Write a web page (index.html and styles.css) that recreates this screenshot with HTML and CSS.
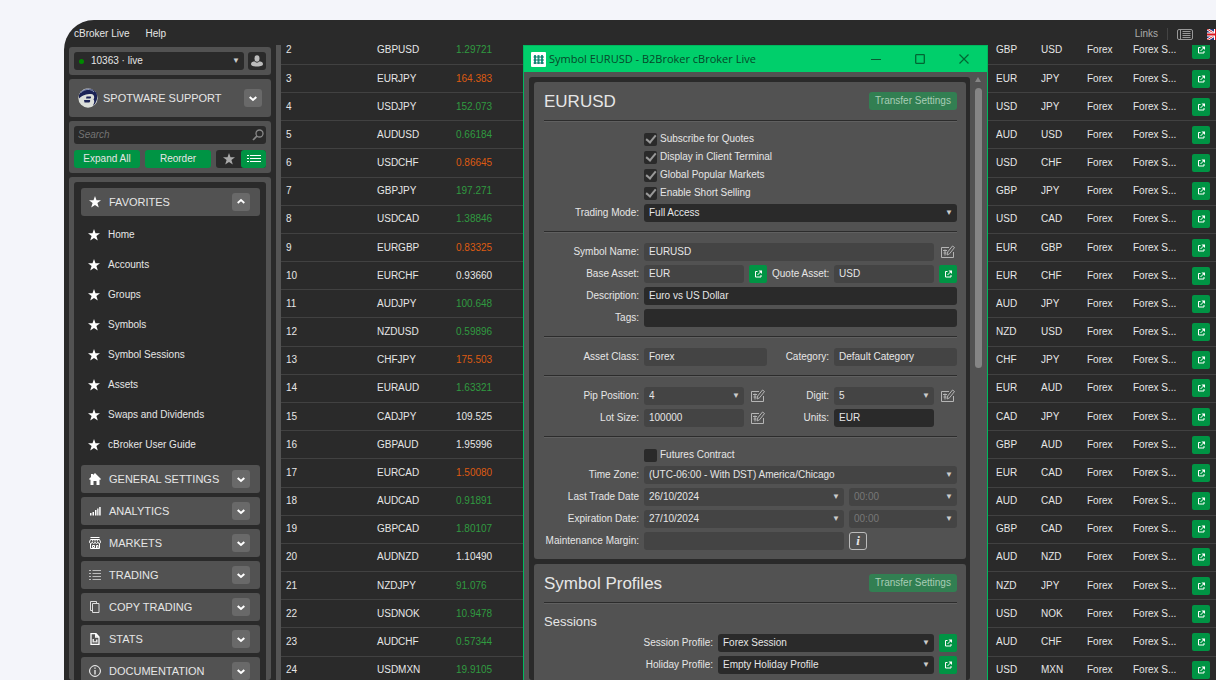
FILE: index.html
```html
<!doctype html>
<html lang="en">
<head>
<meta charset="utf-8">
<title>cBroker Live</title>
<link rel="stylesheet" href="styles.css">
</head>
<body>
<svg class="defs" aria-hidden="true">
	<symbol id="star" viewBox="0 0 12 12"><path fill="currentColor" d="M6 0l1.5 4.3H12L8.4 7l1.4 4.6L6 8.9l-3.8 2.7L3.6 7 0 4.3h4.5z"/></symbol>
	<symbol id="down" viewBox="0 0 12 12"><path fill="none" stroke="currentColor" stroke-width="2" d="M2.700 5L6 8l3.300-3"/></symbol>
	<symbol id="up" viewBox="0 0 12 12"><path fill="none" stroke="currentColor" stroke-width="1.700" d="M2.700 7L6 4l3.300 3"/></symbol>
	<symbol id="open" viewBox="0 0 18 18"><path fill="none" stroke="currentColor" d="M8.500 6.500h-2v5.500h5.500v-2M8.500 10l3-3"/><path fill="currentColor" d="M9.500 5.500h3.500V9z"/></symbol>
	<symbol id="edit" viewBox="0 0 14 14"><path fill="none" stroke="currentColor" d="M8 2.500H.5v10h12V7M2 5.500h4M4 4.500v6M2.500 8h3M6 10l.7-3L11.500 1l2 1.500-5 6.300z"/></symbol>
	<symbol id="home" viewBox="0 0 12 12"><path fill="currentColor" d="M6 0l6 6-1 1-.5-.5V12H7.500V8h-3v4h-3V6.500L1 7 0 6l2-2V1h2v1z"/></symbol>
	<symbol id="bars" viewBox="0 0 12 12"><path fill="currentColor" d="M1 8h1.500v2.500H1zM3.500 7H5v3.500H3.500zM6 5h1.500v5.500H6zM8.200 3.500h1.300v7H8.200zM10.200 2h1.500v8.500h-1.500z"/></symbol>
	<symbol id="shop" viewBox="0 0 12 12"><path fill="none" stroke="currentColor" d="M1.500.5h9M1.500 2.500h9l1 2.500c0 2-2.500 2-2.700 0 0 2-2.500 2-2.800 0 0 2-2.500 2-2.800 0 0 2-2.700 2-2.700 0zM1.500 6.500v5h9v-5M3.500 8.500h2v2h-2zM7.500 11V8.500h1.500V11M3.700 2.500v2M6 2.500v2M8.300 2.500v2"/></symbol>
	<symbol id="list" viewBox="0 0 12 12"><path stroke="#bbb" d="M0 1.500h2M3.500 1.500H12M0 4.500h2M3.500 4.500H12M0 7.500h2M3.500 7.500H12M0 10.500h2M3.500 10.500H12"/></symbol>
	<symbol id="copy" viewBox="0 0 12 12"><path fill="none" stroke="#ddd" d="M3.500 2.500h6.500v9H3.500zM3 9.500H1.500v-9h6V2"/></symbol>
	<symbol id="stats" viewBox="0 0 12 12"><path fill="none" stroke="currentColor" stroke-width="1.300" d="M2 .7h5L10 4v7.300H2zM6.700.7V4H10M4.200 9.500V6M6 9.500V8M7.800 9.500v-3"/></symbol>
	<symbol id="info" viewBox="0 0 12 12"><circle cx="6" cy="6" r="5.400" fill="none" stroke="currentColor"/><path stroke="currentColor" stroke-width="1.200" d="M6 2.500v1.300M6 5v4.500"/></symbol>
</svg>

<div class="app">
	<header class="menu">
		<a href="#">cBroker Live</a>
		<a href="#">Help</a>
		<div class="menu-right">
			<a href="#">Links</a>
			<i class="split"></i>
			<svg class="layout" viewBox="0 0 16 11"><rect x=".5" y=".5" width="15" height="10" rx="1.500" fill="none" stroke="#999"/><path stroke="#999" d="M3.500 0v11M5.500 2.500h8M5.500 4.500h8M5.500 6.500h8M5.500 8.500h8"/></svg>
			<svg class="flag" viewBox="0 0 18 11"><path fill="#24367d" d="M0 0h18v11H0z"/><path stroke="#fff" stroke-width="2.500" d="M0 0l18 11M18 0L0 11"/><path stroke="#d22" d="M0 0l18 11M18 0L0 11"/><path stroke="#fff" stroke-width="4" d="M9 0v11M0 5.500h18"/><path stroke="#d8171f" stroke-width="2" d="M9 0v11M0 5.500h18"/></svg>
		</div>
	</header>

	<div class="main">
		<aside class="side">
			<div class="panel account">
				<div class="pick account-pick"><select aria-label="Account"><option>10363 · live</option></select><i class="dot"></i></div>
				<button class="user" aria-label="User"><svg viewBox="0 0 12 12"><ellipse cx="6" cy="3.500" rx="2.500" ry="3.300" fill="#bbb"/><path fill="#bbb" d="M0 9c0-2 2-2.500 4-2.500.5 1.500 3.500 1.500 4 0 2 0 4 .5 4 2.500 0 1.500-1.500 2.500-6 2.500S0 10.500 0 9z"/></svg></button>
			</div>

			<div class="panel company">
				<svg class="logo" viewBox="0 0 20 20"><circle cx="10" cy="10" r="9.700" fill="#dcdfda"/><path fill="#1c2355" d="M1 7C4 0 14-2 18.500 5c1.500 5 .5 9-3.500 13 1-3 2-4.500.5-6.500 1.500-2 .5-5.500-2.500-5.500-5 0-8 1-12 4.500z"/><path fill="#1c2355" d="M8.500 8.500h4c1 0 .5 2-.5 2H8zM6 12h5.500c1.500 0 .5 2.500-.5 2.500H6.500z"/><path fill="none" stroke="#8c97b5" d="M3 4.500C7 .5 13 .5 16 4"/></svg>
				<span>SPOTWARE SUPPORT</span>
				<button class="toggle" aria-label="Expand"><svg><use href="#down"/></svg></button>
			</div>

			<div class="panel tools">
				<div class="search">
					<input type="search" placeholder="Search" aria-label="Search">
					<svg viewBox="0 0 12 12"><circle cx="7.500" cy="4.500" r="3.500" fill="none" stroke="#888" stroke-width="1.300"/><path stroke="#888" stroke-width="1.700" d="M5 7L1 11"/></svg>
				</div>
				<div class="tool-row">
					<button class="green">Expand All</button>
					<button class="green">Reorder</button>
					<div class="switch">
						<button aria-label="Favorites"><svg><use href="#star"/></svg></button>
						<button class="on" aria-label="List"><svg viewBox="0 0 14 10"><path stroke="#fff" d="M0 1.500h2M3 1.500h11M0 4.500h2M3 4.500h11M0 7.500h2M3 7.500h11" /></svg></button>
					</div>
				</div>
			</div>

			<nav class="panel nav">
				<div class="nav-inner">
					<div class="group"><svg><use href="#star"/></svg><span>FAVORITES</span><button class="toggle" aria-label="Collapse"><svg><use href="#up"/></svg></button></div>
					<ul class="links">
						<li><a href="#"><svg><use href="#star"/></svg>Home</a></li>
						<li><a href="#"><svg><use href="#star"/></svg>Accounts</a></li>
						<li><a href="#"><svg><use href="#star"/></svg>Groups</a></li>
						<li><a href="#"><svg><use href="#star"/></svg>Symbols</a></li>
						<li><a href="#"><svg><use href="#star"/></svg>Symbol Sessions</a></li>
						<li><a href="#"><svg><use href="#star"/></svg>Assets</a></li>
						<li><a href="#"><svg><use href="#star"/></svg>Swaps and Dividends</a></li>
						<li><a href="#"><svg><use href="#star"/></svg>cBroker User Guide</a></li>
					</ul>
					<div class="group"><svg><use href="#home"/></svg><span>GENERAL SETTINGS</span><button class="toggle" aria-label="Expand"><svg><use href="#down"/></svg></button></div>
					<div class="group"><svg><use href="#bars"/></svg><span>ANALYTICS</span><button class="toggle" aria-label="Expand"><svg><use href="#down"/></svg></button></div>
					<div class="group"><svg><use href="#shop"/></svg><span>MARKETS</span><button class="toggle" aria-label="Expand"><svg><use href="#down"/></svg></button></div>
					<div class="group"><svg><use href="#list"/></svg><span>TRADING</span><button class="toggle" aria-label="Expand"><svg><use href="#down"/></svg></button></div>
					<div class="group"><svg><use href="#copy"/></svg><span>COPY TRADING</span><button class="toggle" aria-label="Expand"><svg><use href="#down"/></svg></button></div>
					<div class="group"><svg><use href="#stats"/></svg><span>STATS</span><button class="toggle" aria-label="Expand"><svg><use href="#down"/></svg></button></div>
					<div class="group"><svg><use href="#info"/></svg><span>DOCUMENTATION</span><button class="toggle" aria-label="Expand"><svg><use href="#down"/></svg></button></div>
				</div>
			</nav>
		</aside>

		<div class="grid">
			<table>
				<colgroup><col class="c-num"><col class="c-sym"><col><col class="c-base"><col class="c-quote"><col class="c-quote"><col class="c-cat"><col class="c-open"></colgroup>
				<tbody id="rows"></tbody>
			</table>
		</div>
	</div>

	<section class="window" role="dialog" aria-labelledby="win-title">
		<div class="titlebar">
			<svg class="win-icon" viewBox="0 0 15 15"><rect width="15" height="15" rx="1" fill="#fff"/><path stroke="#1b9e8a" stroke-width="2" d="M4 3v9M7.500 3v9M11 3v9"/><path stroke="#156d63" stroke-width="1.200" d="M2.500 5H13M2.500 8H13M2.500 11H13"/></svg>
			<span id="win-title">Symbol EURUSD - B2Broker cBroker Live</span>
			<button aria-label="Minimize"><svg viewBox="0 0 10 10"><path stroke="#0a5a32" d="M0 5.500h10"/></svg></button>
			<button aria-label="Maximize"><svg viewBox="0 0 10 10"><rect x=".7" y=".7" width="8.600" height="8.600" rx=".5" fill="none" stroke="#063" stroke-width="1.300"/></svg></button>
			<button aria-label="Close"><svg viewBox="0 0 10 10"><path stroke="#063" stroke-width="1.200" d="M.5.5l9 9M9.500.5l-9 9"/></svg></button>
		</div>
		<div class="win-body">
			<div class="frame">
				<form class="card">
					<div class="head"><h2>EURUSD</h2><button type="button" class="transfer" disabled>Transfer Settings</button></div>
					<hr>
					<div class="rows">
						<label class="check"><input type="checkbox" checked disabled>Subscribe for Quotes</label>
						<label class="check"><input type="checkbox" checked disabled>Display in Client Terminal</label>
						<label class="check"><input type="checkbox" checked disabled>Global Popular Markets</label>
						<label class="check"><input type="checkbox" checked disabled>Enable Short Selling</label>
						<div class="row wide"><label for="mode">Trading Mode:</label><div class="pick"><select id="mode"><option>Full Access</option></select></div></div>
					</div>
					<hr>
					<div class="rows">
						<div class="row name"><label for="name">Symbol Name:</label><input id="name" class="dim" value="EURUSD" readonly><button type="button" class="edit" aria-label="Edit"><svg><use href="#edit"/></svg></button></div>
						<div class="row">
							<label for="base">Base Asset:</label><input id="base" class="dim" value="EUR" readonly><button type="button" class="open" aria-label="Open"><svg><use href="#open"/></svg></button>
							<label for="quote">Quote Asset:</label><input id="quote" class="dim" value="USD" readonly><button type="button" class="open" aria-label="Open"><svg><use href="#open"/></svg></button>
						</div>
						<div class="row wide"><label for="desc">Description:</label><input id="desc" value="Euro vs US Dollar"></div>
						<div class="row wide"><label for="tags">Tags:</label><input id="tags"></div>
					</div>
					<hr>
					<div class="rows">
						<div class="row">
							<label for="class">Asset Class:</label><input id="class" class="dim span" value="Forex" readonly>
							<label for="cat">Category:</label><input id="cat" class="dim span" value="Default Category" readonly>
						</div>
					</div>
					<hr>
					<div class="rows">
						<div class="row">
							<label for="pip">Pip Position:</label><div class="pick dim"><select id="pip"><option>4</option></select></div><button type="button" class="edit" aria-label="Edit"><svg><use href="#edit"/></svg></button>
							<label for="digit">Digit:</label><div class="pick dim"><select id="digit"><option>5</option></select></div><button type="button" class="edit" aria-label="Edit"><svg><use href="#edit"/></svg></button>
						</div>
						<div class="row">
							<label for="lot">Lot Size:</label><input id="lot" class="dim" value="100000" readonly><button type="button" class="edit" aria-label="Edit"><svg><use href="#edit"/></svg></button>
							<label for="units">Units:</label><input id="units" value="EUR">
						</div>
					</div>
					<hr>
					<div class="rows">
						<label class="check"><input type="checkbox" disabled>Futures Contract</label>
						<div class="row wide"><label for="zone">Time Zone:</label><div class="pick dim"><select id="zone"><option>(UTC-06:00 - With DST) America/Chicago</option></select></div></div>
						<div class="row date"><label for="last">Last Trade Date</label><div class="pick dim"><select id="last"><option>26/10/2024</option></select></div><div class="pick dim off"><select aria-label="Last trade time"><option>00:00</option></select></div></div>
						<div class="row date"><label for="exp">Expiration Date:</label><div class="pick dim"><select id="exp"><option>27/10/2024</option></select></div><div class="pick dim off"><select aria-label="Expiration time"><option>00:00</option></select></div></div>
						<div class="row date"><label for="margin">Maintenance Margin:</label><input id="margin" class="dim" readonly><button type="button" class="help" aria-label="About maintenance margin">i</button></div>
					</div>
				</form>
				<form class="card">
					<div class="head"><h2>Symbol Profiles</h2><button type="button" class="transfer" disabled>Transfer Settings</button></div>
					<hr>
					<div class="rows">
						<h3>Sessions</h3>
						<div class="row profile"><label for="session">Session Profile:</label><div class="pick"><select id="session"><option>Forex Session</option></select></div><button type="button" class="open" aria-label="Open"><svg><use href="#open"/></svg></button></div>
						<div class="row profile"><label for="holiday">Holiday Profile:</label><div class="pick"><select id="holiday"><option>Empty Holiday Profile</option></select></div><button type="button" class="open" aria-label="Open"><svg><use href="#open"/></svg></button></div>
					</div>
				</form>
			</div>
			<div class="scroll"><i class="arrow"></i><i class="thumb"></i></div>
		</div>
	</section>
</div>
<script src="script.js"></script>
</body>
</html>
```

FILE: styles.css
```css
*{box-sizing:border-box;}
body{margin:0;background:#f4f5fa;color:#e6e6e6;font:10px/18px "Liberation Sans",Arial,sans-serif;}
button,input,select{font:inherit;color:inherit;border:0;margin:0;padding:0;background:none;outline:0;min-width:0;}
button{display:flex;align-items:center;justify-content:center;}
a{color:inherit;text-decoration:none;}
svg{display:block;flex:none;width:12px;height:12px;}
.defs{position:absolute;width:0;height:0;}

.app{position:relative;display:flex;flex-direction:column;height:calc(100vh - 20px);margin:20px 0 0 64px;background:#2a2a2a;border-top-left-radius:30px;overflow:hidden;}
.menu{display:flex;align-items:center;gap:16px;height:25px;padding:3px 0 0 10px;flex:none;}
.menu-right{display:flex;align-items:center;gap:9px;margin-left:auto;color:#aaa;overflow:hidden;}
.split{width:1px;height:12px;background:#444;}
.layout{width:16px;height:11px;}
.flag{width:18px;height:11px;margin:0 -9px 0 5px;}
.main{display:flex;flex:1;min-height:0;}

/* sidebar */
.side{display:flex;flex-direction:column;gap:4px;flex:none;width:212px;padding:2px 5px 0;}
.panel{background:#525252;border-radius:3px;padding:5px;flex:none;}
.account{display:flex;gap:4px;}
.account-pick{flex:1;}
.dot{position:absolute;left:5px;top:7px;width:5px;height:5px;border-radius:50%;background:#008a00;}
.user{width:18px;height:18px;background:#2a2a2a;border-radius:3px;}
.company{display:flex;align-items:center;height:38px;padding:0 9px;font-size:11px;}
.company span{flex:1;padding-left:5px;}
.logo{width:20px;height:20px;}
.toggle{width:18px;height:18px;background:#696969;border-radius:3px;color:#fff;}
.tools{display:flex;flex-direction:column;gap:6px;}
.search{display:flex;align-items:center;height:18px;padding:0 2px 0 4px;background:#2a2a2a;border-radius:3px;}
.search input{flex:1;font-style:italic;}
.search input::placeholder{color:#737373;}
.tool-row{display:flex;gap:5px;}
.green{flex:1;height:18px;background:#009444;border-radius:3px;}
.switch{display:flex;width:50px;height:18px;background:#2a2a2a;border-radius:3px;}
.switch button{flex:1;color:#aaa;border-radius:3px;}
.switch .on{background:#009444;}
.switch .on svg{width:14px;height:10px;}
.nav{flex:1;min-height:0;padding-bottom:0;overflow:hidden;}
.nav-inner{padding:6px 6px 0 7px;background:#2a2a2a;border-radius:3px;}
.group{display:flex;align-items:center;height:28px;margin-bottom:4px;padding:0 10px 0 8px;background:#525252;border-radius:3px;font-size:11px;}
.group span{flex:1;padding-left:8px;}
.links{list-style:none;margin:0;padding:0 0 5px 7px;}
.links a{display:flex;align-items:center;gap:8px;height:30px;}
.links svg,.group svg{color:#fff;}

/* symbols table */
.grid{flex:1;min-width:0;overflow:hidden;border-left:5px solid #545454;}
table{width:100%;height:648px;margin-top:-8px;table-layout:fixed;border-collapse:collapse;}
td{padding:0 0 0 5px;border-bottom:1px solid #414141;white-space:nowrap;overflow:hidden;}
.c-num{width:91px;}
.c-sym{width:79px;}
.c-base{width:45px;}
.c-quote{width:46px;}
.c-cat{width:59px;}
.c-open{width:29px;}
.rise{color:#309a40;}
.fall{color:#dd5a12;}
.open{width:18px;height:18px;background:#009444;border-radius:2px;color:#fff;}
.open svg{width:18px;height:18px;}

/* symbol window */
.window{position:absolute;left:459px;top:25px;bottom:0;width:465px;display:flex;flex-direction:column;background:#525252;border:1px solid #00b85f;border-bottom:0;overflow:hidden;}
.titlebar{display:flex;align-items:center;height:26px;flex:none;padding:0 1px 0 7px;background:#00cf6b;color:#06482a;font:11px/18px "Open Sans","Noto Sans",sans-serif;}
.titlebar span{flex:1;padding-left:3px;white-space:nowrap;}
.win-icon{width:15px;height:15px;}
.titlebar button{width:44px;height:26px;}
.titlebar button svg{width:10px;height:10px;}
.win-body{display:flex;flex:1;min-height:0;padding:5px 1px 0 5px;}
.frame{display:flex;flex-direction:column;gap:5px;flex:1;padding:5px 4px 0 5px;background:#2a2a2a;border-radius:3px;}
.card{padding:10px 9px 9px 10px;background:#525252;border-radius:3px;flex:none;}
.head{display:flex;justify-content:space-between;height:19px;}
h2,h3{margin:0;font-weight:normal;}
h2{font-size:17px;line-height:19px;}
h3{font-size:13px;line-height:16px;}
.transfer{width:88px;height:18px;background:#327f52;border-radius:3px;color:#a9cdb6;}
hr{height:2px;margin:9px 0 10px;border:0;border-top:1px solid #2c2c2c;background:#606060;}
.rows{display:flex;flex-direction:column;gap:4px;}
.row{display:grid;grid-template-columns:95px minmax(0,1fr) 18px 57px minmax(0,1fr) 18px;gap:5px;height:18px;}
.row label{text-align:right;white-space:nowrap;}
.wide{grid-template-columns:95px 1fr;}
.name{grid-template-columns:95px 1fr 18px;}
.date{grid-template-columns:95px 1fr 108px;}
.profile{grid-template-columns:169px 1fr 18px;}
.row input{padding:0 5px;background:#2a2a2a;border-radius:3px;width:100%;}
.pick{position:relative;background:#2a2a2a;border-radius:3px;}
.pick select{width:100%;height:18px;padding:0 16px 0 5px;appearance:none;display:block;}
.account-pick select{padding-left:17px;}
.pick::after{content:"▼";position:absolute;right:4px;top:0;font-size:8px;color:#ccc;pointer-events:none;}
.row .dim{background:#444;}
.off select{color:#777;}
.span{grid-column:span 2;}
.edit{color:#b5b5b5;}
.edit svg{width:14px;height:14px;}
.check{display:flex;align-items:center;gap:3px;height:14px;margin-left:100px;}
.check input{appearance:none;display:grid;place-items:center;width:13px;height:13px;background:#2a2a2a;border-radius:2px;}
.check input:checked::after{content:"";width:4px;height:8px;margin-top:-2px;border:solid #999;border-width:0 2px 2px 0;transform:rotate(40deg);}
.help{width:18px;height:18px;border:1px solid #bbb;border-radius:3px;font:italic bold 13px "Liberation Serif",serif;}
.scroll{display:flex;flex-direction:column;align-items:center;gap:3px;width:16px;}
.arrow{border:solid transparent;border-width:0 3px 5px;border-bottom-color:#858585;}
.thumb{width:7px;height:280px;background:#858585;border-radius:4px;margin-top:3px;}

.account-pick select{padding-left:17px;}
```

FILE: script.js
```javascript
var symbols = [
	['GBPUSD', '1.29721', 'rise'],
	['EURJPY', '164.383', 'fall'],
	['USDJPY', '152.073', 'rise'],
	['AUDUSD', '0.66184', 'rise'],
	['USDCHF', '0.86645', 'fall'],
	['GBPJPY', '197.271', 'rise'],
	['USDCAD', '1.38846', 'rise'],
	['EURGBP', '0.83325', 'fall'],
	['EURCHF', '0.93660', ''],
	['AUDJPY', '100.648', 'rise'],
	['NZDUSD', '0.59896', 'rise'],
	['CHFJPY', '175.503', 'fall'],
	['EURAUD', '1.63321', 'rise'],
	['CADJPY', '109.525', ''],
	['GBPAUD', '1.95996', ''],
	['EURCAD', '1.50080', 'fall'],
	['AUDCAD', '0.91891', 'rise'],
	['GBPCAD', '1.80107', 'rise'],
	['AUDNZD', '1.10490', ''],
	['NZDJPY', '91.076', 'rise'],
	['USDNOK', '10.9478', 'rise'],
	['AUDCHF', '0.57344', 'rise'],
	['USDMXN', '19.9105', 'rise']
];
var html = '';
symbols.forEach(function(s, i){
	html += '<tr><td>' + (i + 2) + '</td><td>' + s[0] + '</td><td class="' + s[2] + '">' + s[1] + '</td>' +
		'<td>' + s[0].slice(0, 3) + '</td><td>' + s[0].slice(3) + '</td><td>Forex</td><td>Forex S...</td>' +
		'<td><button class="open" aria-label="Open"><svg><use href="#open"/></svg></button></td></tr>';
});
document.getElementById('rows').innerHTML = html;
```
